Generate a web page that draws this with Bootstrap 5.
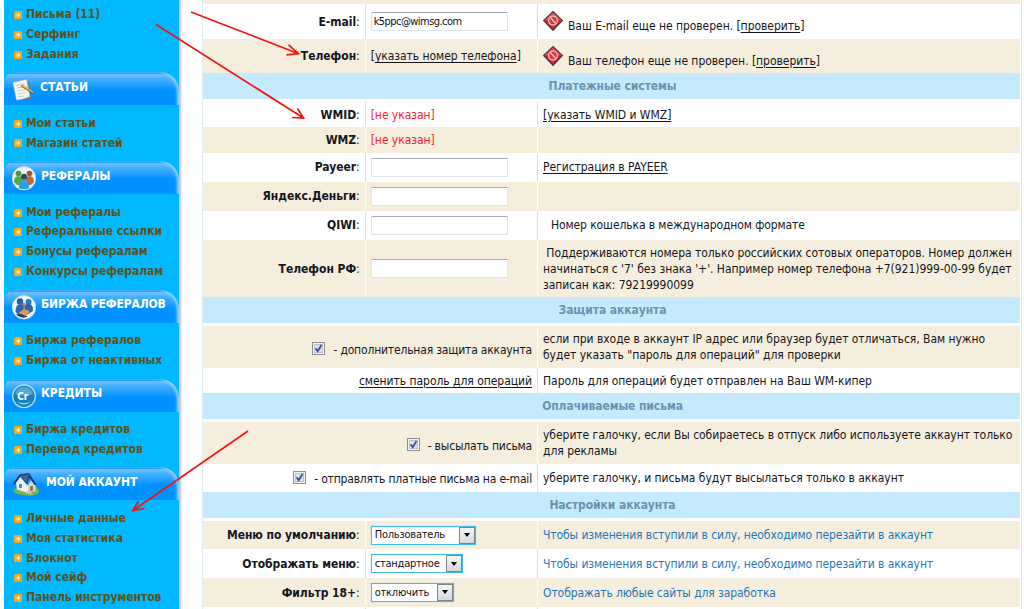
<!DOCTYPE html>
<html lang="ru">
<head>
<meta charset="utf-8">
<meta name="viewport" content="width=device-width, initial-scale=1">
<title>Личные данные</title>
<link href="https://cdn.jsdelivr.net/npm/bootstrap@5.3.0/dist/css/bootstrap.min.css" rel="stylesheet">
<style>
body{font:12px/15.8px "DejaVu Sans Condensed","DejaVu Sans",sans-serif;color:#16161c;background:#fff;letter-spacing:-.04px}
.page{height:609px}
.side{width:175px;margin-left:4px;background:#00b8ff;box-shadow:1px 0 0 #9fd0e4,2px 0 1px #d8d2d2,3px 0 2px #eee;padding-top:4.6px}
.side ul{margin-bottom:8.3px;padding-left:10px;font-weight:700;color:#5f5216}
.side li{height:19.8px;gap:4px;white-space:nowrap;padding-top:1px}
.side .menu-head{height:33px;margin-bottom:8px;color:#fff;font-weight:700;border-radius:11px 19px 0 0;background:linear-gradient(#168fff 0 4%,#6cc3ff 8%,#45b1ff 20%,#1f9eff 42%,#0092ff 54%);box-shadow:inset -3px 1px 3px -1px #9bd5ff;padding:0 0 2px 8px;white-space:nowrap}
.menu-head svg{flex:none}
.grid-box{width:820px;margin-left:23px;border-left:1px solid #d9edf6;border-right:1px solid #d3ebf6;padding-right:1px}
.line{display:grid;grid-template-columns:161.7px 172.3px 1fr}
.line.duo{grid-template-columns:334px 1fr}
.line>div{display:flex;align-items:center;padding:2.4px 5px 0;border-left:1px solid #dedede;white-space:nowrap}
.line>div:first-child{border-left:0;justify-content:flex-end}
.line.duo>div:first-child{letter-spacing:-.18px}
.line.duo>div:first-child a{letter-spacing:-.04px}
.line>.multi{white-space:normal;padding-right:2px}
.line>.mark-cell{padding-left:4px;padding-top:4px}
.tan{background:#f5eedc}
.tan.line>div{border-left-color:#fffdf8}
.title-row{background:#c5eaff;color:#6a93b2;font-weight:700;margin-bottom:3px;padding:2px 0 0 2px;letter-spacing:-.08px}
.h25{height:25.5px}.h28{height:28.6px}.h29{height:29px}.h34{height:34.6px}.h42{height:42px}
.fld{width:137px;height:19px;margin-top:-2px;padding:0 2px;border:1px solid #dfe3ea;border-top-color:#abadb3;border-radius:1px;font-size:11px;line-height:17px;letter-spacing:-.55px;color:#111;background:#fff;display:block}
.fld:focus{outline:0}
a{color:#16161c;text-underline-offset:2px}
a:hover{color:#000}
.none{color:#fb2030}
.note{color:#2377b8;letter-spacing:-.08px}
.chk{width:13px;height:13px;flex:none}
.pick{height:19px;margin-top:-2px;border:1px solid #46bde6;background:#fff;font-size:11px;letter-spacing:-.22px;padding:0 0 0 3px;box-shadow:0 0 1px #8edaf4;color:#111}
.pick i{width:16px;height:17px;border:1px solid #78838a;background:linear-gradient(#f5f5f5,#d5d8da);display:flex;align-items:center;justify-content:center}
.pick i:after{content:"";border:3.5px solid transparent;border-top:4px solid #000;border-bottom:0}
.arrows{left:0;top:0;pointer-events:none}
</style>
</head>
<body>
<svg width="0" height="0" class="position-absolute">
<defs>
<symbol id="dot" viewBox="0 0 8 8"><rect width="8" height="8" rx="1.6" fill="#f7a91b"/><path d="M1.8 4H5.500M3.800 2.200 5.600 4 3.800 5.800" fill="none" stroke="#fff6d8" stroke-width="1.1"/></symbol>
<symbol id="stop" viewBox="0 0 22 22"><path d="M11 .8 21.2 10.5 11 21.2.8 10.5Z" fill="#443a3d"/><path d="M11 2.4 19.6 10.5 11 19.4 2.4 10.5Z" fill="#cc262e"/><path d="M11 2.4 19.6 10.5H2.4Z" fill="#dd5155"/><circle cx="11" cy="10.6" r="4.4" fill="#cf3a3f" stroke="#f4baba" stroke-width="1.3"/><path d="M8.3 7.5 13.8 13.6" stroke="#f4baba" stroke-width="1.5"/></symbol>
<symbol id="check" viewBox="0 0 13 13"><rect x=".5" y=".5" width="12" height="12" fill="#f4f4f4" stroke="#8e8f8f"/><rect x="2.5" y="2.5" width="8" height="8" fill="#dfe3e9" stroke="#bcc3cd"/><path d="M3.6 6.3 5.7 9.2 9.5 3" fill="none" stroke="#3d53a0" stroke-width="1.9"/></symbol>
</defs>
</svg>
<div class="page d-flex position-relative overflow-hidden">
<nav class="side flex-shrink-0">
<ul class="list-unstyled">
<li class="d-flex align-items-center"><svg width="8" height="8"><use href="#dot"/></svg>Письма (11)</li>
<li class="d-flex align-items-center"><svg width="8" height="8"><use href="#dot"/></svg>Серфинг</li>
<li class="d-flex align-items-center"><svg width="8" height="8"><use href="#dot"/></svg>Задания</li>
</ul>
<div class="menu-head d-flex align-items-center"><svg width="23" height="24" viewBox="0 0 23 24" class="me-1 mt-1"><path d="M4 6 17 4l2 17-13 1Z" fill="#6d7680"/><path d="M1 4.500 14.500 1.500l3.300 17Q12 21 4.500 22Z" fill="#f7f5ef" stroke="#c4c3bf" stroke-width=".6"/><path d="M4 7.500 12.500 6M4.500 10.200 12 8.500M5 13 13 11.500M5.500 16l8-1.500M6 19l6-1" stroke="#bcbcbc" stroke-width=".8"/><path d="M9.500 7.500 21.500 14.800" stroke="#7a551c" stroke-width="2.200"/><path d="M10 7.500 21.300 14.200" stroke="#f5cf52" stroke-width="1.300"/></svg><span style="padding-left:1px">СТАТЬИ</span></div>
<ul class="list-unstyled">
<li class="d-flex align-items-center"><svg width="8" height="8"><use href="#dot"/></svg>Мои статьи</li>
<li class="d-flex align-items-center"><svg width="8" height="8"><use href="#dot"/></svg>Магазин статей</li>
</ul>
<div class="menu-head d-flex align-items-center"><svg width="24" height="25" viewBox="0 0 24 25" class="me-1 mt-1"><circle cx="12" cy="12.3" r="11.8" fill="#e9f1f3" stroke="#bfd6e4" stroke-width=".6"/><circle cx="6.5" cy="7.5" r="2.8" fill="#4c913b"/><path d="M2 16q0-6 4.5-6t4.5 6l-3 3H5Z" fill="#5ba543"/><circle cx="17.5" cy="7.5" r="2.8" fill="#a4572f"/><path d="M13 16q0-6 4.5-6t4.5 6l-3 3h-3Z" fill="#bd6842"/><circle cx="12" cy="10.8" r="3" fill="#31495c"/><path d="M6.8 22q0-8 5.2-8t5.2 8q-5 2.5-10.4 0Z" fill="#2e9fe0"/><path d="M4 4.5 7 3M15 3.5l4-.5" stroke="#fff"/></svg><span style="padding-left:1px">РЕФЕРАЛЫ</span></div>
<ul class="list-unstyled">
<li class="d-flex align-items-center"><svg width="8" height="8"><use href="#dot"/></svg>Мои рефералы</li>
<li class="d-flex align-items-center"><svg width="8" height="8"><use href="#dot"/></svg>Реферальные ссылки</li>
<li class="d-flex align-items-center"><svg width="8" height="8"><use href="#dot"/></svg>Бонусы рефералам</li>
<li class="d-flex align-items-center"><svg width="8" height="8"><use href="#dot"/></svg>Конкурсы рефералам</li>
</ul>
<div class="menu-head d-flex align-items-center"><svg width="24" height="25" viewBox="0 0 24 25" class="me-1 mt-1"><circle cx="12" cy="12.3" r="11.8" fill="#eff3f5" stroke="#bfd6e4" stroke-width=".6"/><circle cx="8" cy="6.500" r="3.2" fill="#1d62ac"/><circle cx="16.500" cy="7" r="3" fill="#2a79c4"/><path d="M3.500 17q0-8 5-8 3 0 4 2 2-3 5-2 4 1 3.500 7l-5 3-9 1Z" fill="#2668b4"/><path d="M11.2 14V8.5q1.6-1 1.8 1V14l4 1 .5 3-6 3.5-6-1.500 1.500-3Z" fill="#d19a64" stroke="#4b3d44" stroke-width=".5"/><path d="M4 19.500q5-2 8 1l4 1q-6 3-12-2Z" fill="#273f67"/></svg><span style="letter-spacing:-.12px;padding-left:1px">БИРЖА РЕФЕРАЛОВ</span></div>
<ul class="list-unstyled">
<li class="d-flex align-items-center"><svg width="8" height="8"><use href="#dot"/></svg>Биржа рефералов</li>
<li class="d-flex align-items-center"><svg width="8" height="8"><use href="#dot"/></svg>Биржа от неактивных</li>
</ul>
<div class="menu-head d-flex align-items-center"><svg width="24" height="25" viewBox="0 0 24 25" class="me-1 mt-1"><circle cx="12" cy="12.3" r="11.3" fill="#1c80b8" stroke="#b9dcec" stroke-width="1.3"/><path d="M3 10a9.3 9.3 0 0 1 18 0q-9 4-18 0Z" fill="#65b9dc" opacity=".75"/><path d="M5 18q7 5 14 0-7 2-14 0Z" fill="#7de3f4"/><text x="5.3" y="16" font-size="10" font-weight="700" fill="#fff">Cr</text></svg><span style="padding-left:1px">КРЕДИТЫ</span></div>
<ul class="list-unstyled">
<li class="d-flex align-items-center"><svg width="8" height="8"><use href="#dot"/></svg>Биржа кредитов</li>
<li class="d-flex align-items-center"><svg width="8" height="8"><use href="#dot"/></svg>Перевод кредитов</li>
</ul>
<div class="menu-head d-flex align-items-center"><svg width="28" height="25" viewBox="0 0 28 25" class="me-1 mt-1"><path d="M2 17q-2 4 4 5 8 3 17 1 6-3 3-6-5-5-12-4Z" fill="#79b347"/><path d="M4 11 8 5 16 14v7L5 17.500Z" fill="#edf1f5"/><path d="m16 13 4-6 3.500 6v6L16 21Z" fill="#cbd7e2"/><path d="M1 11.500 7.500 2.500 17 1l7.500 11.500-2 .5L17.500 6 15 12.500 8.500 4.500 2.500 12.500Z" fill="#183d70"/><path d="M8 4 17 2l-2 9Z" fill="#35669c"/><path d="M7 12h3v4H7z" fill="#588ab5"/><path d="M18 14h3v5h-3z" fill="#9b7550"/><path d="m13 21 4-3 4 5Z" fill="#c4c8b0"/></svg><span style="padding-left:2px">МОЙ АККАУНТ</span></div>
<ul class="list-unstyled">
<li class="d-flex align-items-center"><svg width="8" height="8"><use href="#dot"/></svg>Личные данные</li>
<li class="d-flex align-items-center"><svg width="8" height="8"><use href="#dot"/></svg>Моя статистика</li>
<li class="d-flex align-items-center"><svg width="8" height="8"><use href="#dot"/></svg>Блокнот</li>
<li class="d-flex align-items-center"><svg width="8" height="8"><use href="#dot"/></svg>Мой сейф</li>
<li class="d-flex align-items-center"><svg width="8" height="8"><use href="#dot"/></svg>Панель инструментов</li>
</ul>
</nav>
<main class="grid-box flex-shrink-0">
<div class="tan" style="height:4px"></div>
<div class="line h34"><div><b>E-mail</b>:</div><div><input class="fld" value="k5ppc@wimsg.com" aria-label="E-mail"></div><div class="mark-cell"><svg width="22" height="22" class="me-1 mb-1"><use href="#stop"/></svg><span class="pt-2">Ваш E-mail еще не проверен. [<a href="#">проверить</a>]</span></div></div>
<div class="line tan h34"><div><b>Телефон</b>:</div><div>[<a href="#">указать номер телефона</a>]</div><div class="mark-cell"><svg width="22" height="22" class="me-1 mb-1"><use href="#stop"/></svg><span class="pt-2">Ваш телефон еще не проверен. [<a href="#">проверить</a>]</span></div></div>
<div class="title-row h25 d-flex align-items-center justify-content-center">Платежные системы</div>
<div class="line h25"><div><b>WMID</b>:</div><div class="none">[не указан]</div><div><a href="#">[указать WMID и WMZ]</a></div></div>
<div class="line tan h25"><div><b>WMZ</b>:</div><div class="none">[не указан]</div><div></div></div>
<div class="line h29"><div><b>Payeer</b>:</div><div><input class="fld" aria-label="Payeer"></div><div><a href="#">Регистрация в PAYEER</a></div></div>
<div class="line tan h29"><div><b>Яндекс.Деньги</b>:</div><div><input class="fld" aria-label="Яндекс.Деньги"></div><div></div></div>
<div class="line h29"><div><b>QIWI</b>:</div><div><input class="fld" aria-label="QIWI"></div><div><span class="ps-2" style="letter-spacing:-.1px">Номер кошелька в международном формате</span></div></div>
<div class="line tan" style="height:57.500px"><div><b>Телефон РФ</b>:</div><div><input class="fld" aria-label="Телефон РФ"></div><div class="multi"><span>&nbsp;Поддерживаются номера только российских сотовых операторов. Номер должен<br>начинаться с '7' без знака '+'. Например номер телефона +7(921)999-00-99 будет<br>записан как: 79219990099</span></div></div>
<div class="title-row h25 d-flex align-items-center justify-content-center">Защита аккаунта</div>
<div class="line duo tan h42"><div class="pt-2"><svg class="chk me-2 mb-1"><use href="#check"/></svg><span>- дополнительная защита аккаунта</span></div><div class="multi"><span>если при входе в аккаунт IP адрес или браузер будет отличаться, Вам нужно<br>будет указать "пароль для операций" для проверки</span></div></div>
<div class="line duo h25"><div><a href="#">сменить пароль для операций</a></div><div>Пароль для операций будет отправлен на Ваш WM-кипер</div></div>
<div class="title-row h25 d-flex align-items-center justify-content-center">Оплачиваемые письма</div>
<div class="line duo tan h42"><div class="pt-2"><svg class="chk me-2 mb-1"><use href="#check"/></svg><span>- высылать письма</span></div><div class="multi"><span>уберите галочку, если Вы собираетесь в отпуск либо используете аккаунт только<br>для рекламы</span></div></div>
<div class="line duo h28"><div class="pt-1"><svg class="chk me-2 mb-1"><use href="#check"/></svg><span>- отправлять платные письма на e-mail</span></div><div>уберите галочку, и письма будут высылаться только в аккаунт</div></div>
<div class="title-row h25 d-flex align-items-center justify-content-center">Настройки аккаунта</div>
<div class="line tan h28"><div><b>Меню по умолчанию</b>:</div><div><span class="pick d-flex align-items-center justify-content-between" style="width:105px">Пользователь<i></i></span></div><div class="note">Чтобы изменения вступили в силу, необходимо перезайти в аккаунт</div></div>
<div class="line h28"><div><b>Отображать меню</b>:</div><div><span class="pick d-flex align-items-center justify-content-between" style="width:92px">стандартное<i></i></span></div><div class="note">Чтобы изменения вступили в силу, необходимо перезайти в аккаунт</div></div>
<div class="line tan h28"><div><b>Фильтр 18+</b>:</div><div><span class="pick d-flex align-items-center justify-content-between" style="width:83px">отключить<i></i></span></div><div class="note">Отображать любые сайты для заработка</div></div>
<div class="line h28"><div></div><div></div><div></div></div>
</main>
<svg class="arrows position-absolute" width="310" height="609" fill="none" stroke="#f51414" stroke-width="1.7"><path d="M191 12 298 53.500M288.500 44.800 298.500 53.700 286.500 54.800M156 24.500 303.500 118M297.500 108.500 303.500 118 292 117.500M248 431 133 510.500M138.500 501 133 510.500 144.500 508.500"/></svg>
</div>
<script src="https://cdn.jsdelivr.net/npm/bootstrap@5.3.0/dist/js/bootstrap.bundle.min.js"></script>
</body>
</html>
